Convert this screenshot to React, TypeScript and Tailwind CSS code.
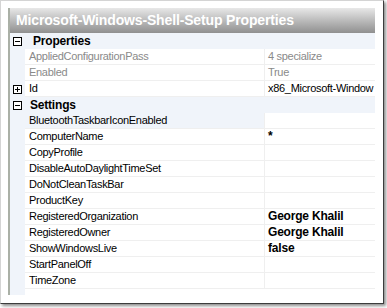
import React from "react";

type Row = {
  name: string;
  value?: string;
  bold?: boolean;
  muted?: boolean;
  expand?: boolean;
  highlight?: boolean;
};

const propertyRows: Row[] = [
  { name: "AppliedConfigurationPass", value: "4 specialize", muted: true },
  { name: "Enabled", value: "True", muted: true },
  { name: "Id", value: "x86_Microsoft-Window", expand: true },
];

const settingRows: Row[] = [
  { name: "BluetoothTaskbarIconEnabled", highlight: true },
  { name: "ComputerName", value: "*", bold: true },
  { name: "CopyProfile" },
  { name: "DisableAutoDaylightTimeSet" },
  { name: "DoNotCleanTaskBar" },
  { name: "ProductKey" },
  { name: "RegisteredOrganization", value: "George Khalil", bold: true },
  { name: "RegisteredOwner", value: "George Khalil", bold: true },
  { name: "ShowWindowsLive", value: "false", bold: true },
  { name: "StartPanelOff" },
  { name: "TimeZone" },
];

const Box = ({ plus }: { plus?: boolean }) => (
  <div className="relative w-[9px] h-[9px] border border-black bg-white">
    <div className="absolute left-[1px] top-[3px] w-[5px] h-px bg-black" />
    {plus && <div className="absolute left-[3px] top-[1px] w-px h-[5px] bg-black" />}
  </div>
);

const Category = ({ title, indent }: { title: string; indent: string }) => (
  <div className="flex h-4 items-center bg-[#f0f4fa]">
    <div className="w-[15px] flex justify-center items-center">
      <Box />
    </div>
    <span className={`${indent} text-[12px] font-bold text-black tracking-[-0.2px]`}>{title}</span>
  </div>
);

const PropRow = ({ row }: { row: Row }) => (
  <div className="flex h-4">
    <div className="w-[15px] bg-[#f0f4fa] flex justify-center items-center">
      {row.expand && <Box plus />}
    </div>
    <div
      className={`w-[239px] border-b border-[#efefef] pl-[4px] leading-[15px] whitespace-nowrap overflow-hidden ${
        row.highlight ? "bg-[#f0f4fa]" : "bg-white"
      } ${row.muted ? "text-[#8a8a8a]" : "text-black"}`}
    >
      {row.name}
    </div>
    <div
      className={`w-[111px] border-l border-b border-[#efefef] pl-[3px] leading-[15px] whitespace-nowrap overflow-hidden ${
        row.muted ? "text-[#8a8a8a]" : "text-black"
      } ${row.bold ? "font-bold text-[12px] tracking-[-0.2px]" : ""}`}
    >
      {row.value}
    </div>
  </div>
);

export default function App() {
  return (
    <div className="w-[387px] h-[308px] bg-white font-['Liberation_Sans',Arial,sans-serif]">
      <div className="w-[384px] h-[304px] border border-t-[#d4d4d4] border-l-[#d4d4d4] border-r-[#3c3c3c] border-b-[#3c3c3c] shadow-[2px_2px_3px_rgba(0,0,0,0.45)] bg-white pt-[7px] pl-[7px]">
        <div className="w-[367px] h-[287px] border-l-2 border-[#aab0a6] flex flex-col text-[11px] tracking-[-0.3px]">
          <div className="h-[25px] flex items-center pl-[6px] bg-gradient-to-b from-[#e8e8e8] to-[#909090]">
            <span className="text-white font-bold text-[14px] tracking-[-0.15px]">
              Microsoft-Windows-Shell-Setup Properties
            </span>
          </div>
          <Category title="Properties" indent="pl-[8px]" />
          {propertyRows.map((r) => (
            <PropRow key={r.name} row={r} />
          ))}
          <Category title="Settings" indent="pl-[5px]" />
          {settingRows.map((r) => (
            <PropRow key={r.name} row={r} />
          ))}
          <div className="flex-1 flex">
            <div className="w-[15px] bg-[#f0f4fa]" />
          </div>
        </div>
      </div>
    </div>
  );
}
